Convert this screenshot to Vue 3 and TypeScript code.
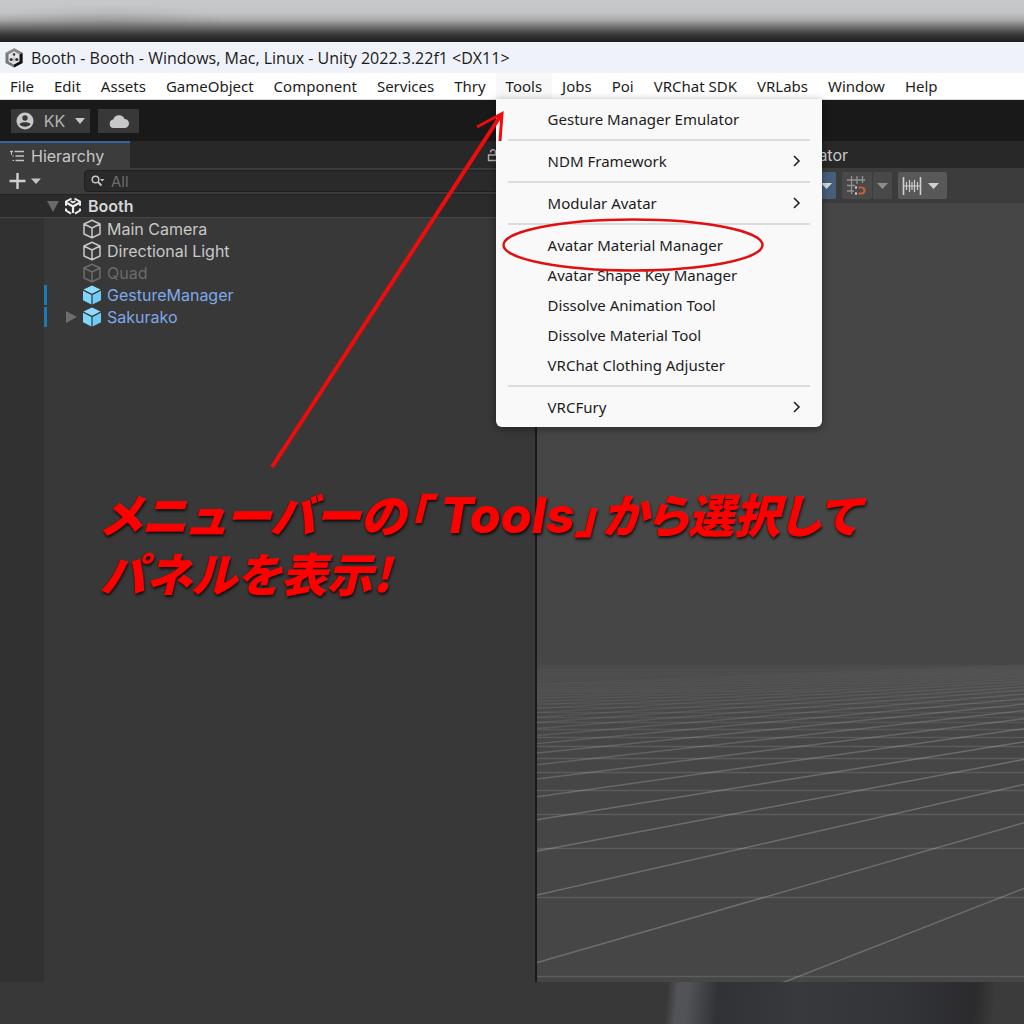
<script setup lang="ts">
interface MenuEntry {
  label?: string
  submenu?: boolean
}

interface HierarchyNode {
  name: string
  kind: 'object' | 'disabled' | 'prefab'
  expandable?: boolean
}

interface GridLine {
  x1: number
  y1: number
  x2: number
  y2: number
  opacity: number
}

const menusBefore: string[] = ['File', 'Edit', 'Assets', 'GameObject', 'Component', 'Services', 'Thry']
const menusAfter: string[] = ['Jobs', 'Poi', 'VRChat SDK', 'VRLabs', 'Window', 'Help']

const toolEntries: MenuEntry[] = [
  { label: 'Gesture Manager Emulator' },
  {},
  { label: 'NDM Framework', submenu: true },
  {},
  { label: 'Modular Avatar', submenu: true },
  {},
  { label: 'Avatar Material Manager' },
  { label: 'Avatar Shape Key Manager' },
  { label: 'Dissolve Animation Tool' },
  { label: 'Dissolve Material Tool' },
  { label: 'VRChat Clothing Adjuster' },
  {},
  { label: 'VRCFury', submenu: true },
]

const nodes: HierarchyNode[] = [
  { name: 'Main Camera', kind: 'object' },
  { name: 'Directional Light', kind: 'object' },
  { name: 'Quad', kind: 'disabled' },
  { name: 'GestureManager', kind: 'prefab' },
  { name: 'Sakurako', kind: 'prefab', expandable: true },
]

// Floor grid in perspective: evenly spaced lines have evenly spaced 1 / distance to the horizon.
const sceneWidth = 487
const horizon = 437
const vanishX = 1123

function fade(distance: number): number {
  return Math.min(0.26, 0.05 + distance / 900, (distance * distance) / 70000)
}

const crossLines: GridLine[] = Array.from({ length: 42 }, (_, n) => {
  const distance = 1 / (0.00298 + 0.000917 * n)
  const y = Math.round(horizon + distance) + 0.5
  return { x1: 0, y1: y, x2: sceneWidth, y2: y, opacity: Math.min(0.15, fade(distance)) }
})

const depthLines: GridLine[] = Array.from({ length: 26 }, (_, n) => {
  const distance = 1 / (0.00228 + 0.00082 * n)
  const end = distance * (1 - sceneWidth / vanishX)
  return { x1: 0, y1: horizon + distance, x2: sceneWidth, y2: horizon + end, opacity: fade(distance) }
})

const gridLines: GridLine[] = [...crossLines, ...depthLines]
</script>

<template>
  <div class="page">
    <div class="backdrop-top"></div>

    <header class="titlebar">
      <svg class="app-icon" viewBox="0 0 20 20" aria-hidden="true">
        <path d="M10 .5 18.500 5v10L10 19.500 1.500 15V5z" fill="#777" />
        <path d="M10 .5 18.500 5v10L10 19.500z" fill="#111" />
        <path d="M10 .5 18.500 5 10 9.500 1.500 5z" fill="#8c8c8c" />
        <path d="M10 3.500 15.500 6.500v7L10 16.500 4.500 13.500v-7z" fill="#e4e4e4" />
        <circle cx="10" cy="6.500" r="1.300" fill="#333" />
        <circle cx="7.200" cy="11.500" r="1.600" fill="#333" />
        <circle cx="12.800" cy="11.500" r="1.600" fill="#333" />
        <path d="M10 9v5" stroke="#aaa" stroke-width="1" />
      </svg>
      <span>Booth - Booth - Windows, Mac, Linux - Unity 2022.3.22f1 &lt;DX11&gt;</span>
    </header>

    <nav class="menubar">
      <button v-for="m in menusBefore" :key="m" type="button" class="menu">{{ m }}</button>
      <div class="menu-open">
        <button type="button" class="menu active" aria-expanded="true">Tools</button>
        <div class="dropdown" role="menu">
          <template v-for="(entry, i) in toolEntries" :key="i">
            <button v-if="entry.label" type="button" class="entry" role="menuitem">
              <span>{{ entry.label }}</span>
              <svg v-if="entry.submenu" width="10" height="12" viewBox="0 0 10 12" aria-hidden="true">
                <path d="M2 1 7 6 2 11" fill="none" stroke="#222" stroke-width="1.600" />
              </svg>
            </button>
            <hr v-else class="rule" />
          </template>
        </div>
      </div>
      <button v-for="m in menusAfter" :key="m" type="button" class="menu">{{ m }}</button>
    </nav>

    <div class="toolbar">
      <button type="button" class="tool account">
        <svg width="18" height="18" viewBox="0 0 18 18" aria-hidden="true">
          <circle cx="9" cy="9" r="8.500" fill="#c8c8c8" />
          <circle cx="9" cy="6" r="2.700" fill="#383838" />
          <path d="M3.500 12C5 9.800 13 9.800 14.500 12 13 15.500 5 15.500 3.500 12z" fill="#383838" />
        </svg>
        <span>KK</span>
        <svg width="10" height="6" viewBox="0 0 10 6" aria-hidden="true"><path d="M0 0h10L5 6z" fill="#c8c8c8" /></svg>
      </button>
      <button type="button" class="tool cloud" aria-label="Cloud">
        <svg width="20" height="14" viewBox="0 0 20 14" aria-hidden="true">
          <path d="M4.500 14a4.300 4.300 0 0 1-.3-8.500A6 6 0 0 1 15.500 5 4.500 4.500 0 0 1 15.500 14z" fill="#c8c8c8" />
        </svg>
      </button>
    </div>

    <main class="workspace">
      <section class="hierarchy">
        <div class="tabs">
          <button type="button" class="tab">
            <svg width="15" height="12" viewBox="0 0 15 12" aria-hidden="true">
              <path d="M0 1.500h3M4.500 1.500H14M5.500 6H14M5.500 10.500H14" stroke="#c4c4c4" stroke-width="1.400" />
              <path d="M1.500 1v4M2.500 6h1.500M2.500 10.500h1.500" stroke="#c4c4c4" stroke-width="1" />
            </svg>
            <span>Hierarchy</span>
          </button>
          <svg class="lock" width="12" height="14" viewBox="0 0 12 14" aria-hidden="true">
            <path d="M1.500 7h9v5.500h-9zM3.500 4.500C3.500 1 8.500 1 8.500 4v3" fill="none" stroke="#b0b0b0" stroke-width="1.400" />
          </svg>
        </div>
        <div class="controls">
          <button type="button" class="add" aria-label="Create">
            <svg width="32" height="18" viewBox="0 0 32 18" aria-hidden="true">
              <path d="M8.500 1v16M.500 9h16" stroke="#d0d0d0" stroke-width="2.400" />
              <path d="M22 6.500h10L27 12z" fill="#c4c4c4" />
            </svg>
          </button>
          <label class="search">
            <svg width="14" height="12" viewBox="0 0 14 12" aria-hidden="true">
              <circle cx="4.500" cy="4.500" r="3.300" fill="none" stroke="#c4c4c4" stroke-width="1.500" />
              <path d="M7 7l3.500 3.500" stroke="#c4c4c4" stroke-width="1.800" />
              <path d="M9 4h4.500L11.200 6.500z" fill="#c4c4c4" />
            </svg>
            <input type="text" placeholder="All" aria-label="Search hierarchy" />
          </label>
        </div>
        <div class="scene-row">
          <svg width="12" height="11" viewBox="0 0 12 11" aria-hidden="true"><path d="M0 0h12L6 11z" fill="#6a6a6a" /></svg>
          <svg width="18" height="18" viewBox="0 0 18 18" aria-hidden="true">
            <path d="M7.500 1.500 2 4.700v4M10.500 1.500 16 4.700v4M2 11.500v2L7 16.700M16 11.500v2L11 16.700" fill="none" stroke="#eee" stroke-width="2" />
            <path d="M9 9.500V16M9 9.500 3 6M9 9.500 15 6" stroke="#eee" stroke-width="2.200" />
            <path d="M6.500 4 9 5.500 11.500 4" fill="none" stroke="#eee" stroke-width="1.600" />
          </svg>
          <span>Booth</span>
        </div>
        <ul class="tree">
          <li v-for="node in nodes" :key="node.name" :class="['node', node.kind]">
            <span class="arrow">
              <svg v-if="node.expandable" width="11" height="12" viewBox="0 0 11 12" aria-hidden="true"><path d="M0 0 11 6 0 12z" fill="#6e6e6e" /></svg>
            </span>
            <svg v-if="node.kind === 'prefab'" width="20" height="20" viewBox="0 0 20 20" aria-hidden="true">
              <path d="M10 .5 18.500 4.500 10 8.800 1.500 4.500z" fill="#8edcff" />
              <path d="M1 5.800 9.400 10v9.500L1 15.300z" fill="#7fd6fd" />
              <path d="M19 5.800 10.600 10v9.500L19 15.300z" fill="#70cbf6" />
            </svg>
            <svg v-else width="20" height="20" viewBox="0 0 20 20" aria-hidden="true">
              <path d="M10 1.200 18 5v10L10 18.800 2 15V5zM2 5l8 4 8-4M10 9v9.500" fill="none" stroke="currentColor" stroke-width="1.500" stroke-linejoin="round" />
            </svg>
            <span>{{ node.name }}</span>
          </li>
        </ul>
      </section>

      <div class="splitter"></div>

      <section class="scene">
        <div class="tabs scene-tabs"><span>Animator</span></div>
        <div class="scene-tools">
          <button type="button" class="chip blue" aria-label="Gizmo options">
            <svg width="11" height="6" viewBox="0 0 11 6" aria-hidden="true"><path d="M0 0h11L5.500 6z" fill="#ddd" /></svg>
          </button>
          <div class="pair">
            <button type="button" class="chip snap" aria-label="Grid snapping">
              <svg width="20" height="20" viewBox="0 0 20 20" aria-hidden="true">
                <path d="M4.500 0v18M10 0v8M15.500 0v7M0 4h18M0 9.500h8M0 15h7" stroke="#929292" stroke-width="1.300" />
                <path d="M11.500 11.500h3a3 3 0 0 1 0 6h-3" fill="none" stroke="#c55f3e" stroke-width="2.200" />
                <path d="M8 10.500h2v2H8zM8 16.500h2v2H8z" fill="#ddd" />
              </svg>
            </button>
            <button type="button" class="chip more" aria-label="Snapping options">
              <svg width="11" height="6" viewBox="0 0 11 6" aria-hidden="true"><path d="M0 0h11L5.500 6z" fill="#8c8c8c" /></svg>
            </button>
          </div>
          <button type="button" class="chip ruler" aria-label="Snap increment">
            <svg width="20" height="18" viewBox="0 0 20 18" aria-hidden="true">
              <path d="M1.500 0v18M18.500 0v18" stroke="#d0d0d0" stroke-width="1.600" />
              <path d="M1 9h18M4.500 5v8M7.500 3v12M10 5v8M12.500 3v12M15.500 5v8" stroke="#d0d0d0" stroke-width="1.200" />
            </svg>
            <svg width="11" height="6" viewBox="0 0 11 6" aria-hidden="true"><path d="M0 0h11L5.500 6z" fill="#d0d0d0" /></svg>
          </button>
        </div>
        <svg class="view" viewBox="0 0 487 779" preserveAspectRatio="xMidYMax slice" aria-hidden="true">
          <defs>
            <linearGradient id="haze" x1="0" y1="0" x2="0" y2="1">
              <stop offset="0" stop-color="#fff" stop-opacity="0" />
              <stop offset="0.150" stop-color="#fff" stop-opacity="0.030" />
              <stop offset="1" stop-color="#fff" stop-opacity="0" />
            </linearGradient>
          </defs>
          <rect x="0" y="458" width="487" height="80" fill="url(#haze)" />
          <line
            v-for="(l, i) in gridLines"
            :key="i"
            :x1="l.x1"
            :y1="l.y1"
            :x2="l.x2"
            :y2="l.y2"
            :stroke-opacity="l.opacity"
            stroke="#e0e0e0"
            stroke-width="1.500"
          />
        </svg>
      </section>
    </main>

    <div class="backdrop-bottom"></div>

    <svg class="marks" width="1024" height="1024" viewBox="0 0 1024 1024" aria-hidden="true">
      <g fill="none" stroke="#f00c0c">
        <path d="M272 467 501 115" stroke-width="4" />
        <path d="M477 127 502 113.500 500 141" stroke-width="3" />
        <ellipse cx="633" cy="245" rx="129.500" ry="25.500" stroke="#e01010" stroke-width="2.400" />
      </g>
    </svg>
    <p class="caption">メニューバーの<span class="quote">「<span class="latin">Tools</span>」</span>から選択して<br />パネルを表示!</p>
  </div>
</template>

<style>
body {
  margin: 0;
  background: #383838;
}
</style>

<style scoped>
* {
  box-sizing: border-box;
}

button {
  margin: 0;
  padding: 0;
  border: 0;
  background: none;
  color: inherit;
  font: inherit;
}

svg {
  display: block;
  flex: none;
}

.page {
  position: relative;
  display: flex;
  flex-direction: column;
  min-height: 100vh;
  overflow: hidden;
  background: #383838;
  font-family: "Noto Sans", sans-serif;
  font-size: 15px;
}

.backdrop-top {
  height: 42px;
  background:
    radial-gradient(ellipse 120px 18px at 110px 22px, rgba(70, 70, 70, 0.15), transparent),
    linear-gradient(#c6c8cb 0, #c3c4c5 13px, #a9a9a9 20px, #707070 27px, #3d3d3d 34px, #1f1f1f 41px);
}

.titlebar {
  display: flex;
  align-items: center;
  gap: 7px;
  height: 31px;
  padding-left: 4px;
  background: #eff3f9;
  color: #1a1a1a;
  font-family: "Open Sans", sans-serif;
  font-size: 16px;
}

.app-icon {
  width: 20px;
  height: 20px;
}

.menubar {
  display: flex;
  height: 27px;
  background: #fff;
  border-bottom: 1px solid #ddd;
  color: #1c1c1c;
}

.menu {
  height: 26px;
  padding: 0 10px;
  white-space: nowrap;
}

.menu.active {
  background: #f8f8f8;
}

.menu-open {
  position: relative;
}

.dropdown {
  position: absolute;
  z-index: 2;
  top: 26px;
  left: 0;
  width: 326px;
  padding: 5px 0;
  border-radius: 0 0 6px 6px;
  background: #f9f9f9;
  box-shadow: 0 2px 8px rgba(0, 0, 0, 0.4);
}

.entry {
  display: flex;
  align-items: center;
  justify-content: space-between;
  width: 100%;
  height: 30px;
  padding: 0 20px 0 52px;
  text-align: left;
}

.rule {
  height: 2px;
  margin: 5px 12px;
  border: 0;
  background: #dcdcdc;
}

.toolbar {
  display: flex;
  gap: 8px;
  height: 41px;
  padding: 9px 11px;
  background: #191919;
  font-family: Inter, sans-serif;
  font-size: 16px;
  color: #b4b4b4;
}

.tool {
  display: flex;
  align-items: center;
  justify-content: center;
  height: 24px;
  background: #383838;
}

.account {
  gap: 10px;
  width: 79px;
}

.cloud {
  width: 41px;
}

.workspace {
  display: grid;
  grid-template-columns: 535fr 2px 487fr;
  flex: 1;
  font-family: Inter, sans-serif;
  font-size: 16px;
  color: #c8c8c8;
}

.hierarchy,
.scene {
  display: flex;
  flex-direction: column;
  min-width: 0;
}

.splitter {
  background: #191919;
}

.tabs {
  display: flex;
  align-items: center;
  justify-content: space-between;
  height: 27px;
  background: #282828;
}

.tab {
  display: flex;
  align-items: center;
  gap: 6px;
  width: 130px;
  height: 27px;
  padding-left: 10px;
  border-top: 2px solid #33679c;
  background: #3c3c3c;
}

.lock {
  margin-right: 36px;
}

.controls {
  display: flex;
  align-items: center;
  gap: 43px;
  height: 27px;
  padding-left: 9px;
  background: #3c3c3c;
  border-bottom: 1px solid #232323;
}

.search {
  display: flex;
  align-items: center;
  gap: 6px;
  flex: 1;
  height: 22px;
  margin-right: 8px;
  padding-left: 6px;
  border: 1px solid #1f1f1f;
  border-radius: 4px;
  background: #2a2a2a;
}

.search input {
  flex: 1;
  min-width: 0;
  padding: 0;
  border: 0;
  outline: 0;
  background: none;
  color: #c8c8c8;
  font: inherit;
  font-size: 15px;
}

.search input::placeholder {
  color: #6c6c6c;
}

.scene-row {
  display: flex;
  align-items: center;
  gap: 6px;
  height: 23px;
  padding-left: 47px;
  border-bottom: 1px solid #454545;
  background: #2b2b2b;
  color: #d6d6d6;
  font-weight: 600;
}

.scene-row svg + svg {
  margin-left: -1px;
}

.tree {
  flex: 1;
  margin: 0;
  padding: 0;
  list-style: none;
  background: linear-gradient(90deg, #313131 44px, #383838 44px);
}

.node {
  display: flex;
  align-items: center;
  gap: 5px;
  height: 22px;
  margin-left: 44px;
}

.node.disabled {
  color: #6b6b6b;
}

.node.prefab {
  color: #7fa8ea;
  background: linear-gradient(#1c7bb5, #1c7bb5) 0 50% / 3px 20px no-repeat;
}

.arrow {
  display: flex;
  justify-content: flex-end;
  width: 33px;
}

.scene {
  background: #464646;
}

.scene-tabs {
  padding-left: 243px;
}

.scene-tools {
  display: flex;
  gap: 6px;
  height: 35px;
  padding: 4px 0 4px 250px;
  background: #3c3c3c;
}

.pair {
  display: flex;
  gap: 1px;
}

.chip {
  display: flex;
  align-items: center;
  justify-content: center;
  height: 27px;
  border-radius: 2px;
  background: #494949;
}

.chip.blue {
  justify-content: flex-end;
  width: 49px;
  padding-right: 4px;
  background: #46607c;
}

.chip.snap {
  width: 30px;
}

.chip.more {
  width: 19px;
}

.chip.ruler {
  gap: 6px;
  width: 49px;
  padding-right: 4px;
  background: #585858;
}

.view {
  flex: 1 1 0;
  width: 100%;
  min-height: 0;
}

.backdrop-bottom {
  height: 42px;
  background:
    linear-gradient(95deg, transparent 65%, #525357 66%, #525357 67%, #313236 70%, #38393d 78%, #333438 88%, #2b2b2e 95%, #3b3b3b 97%),
    #383838;
}

.marks {
  position: absolute;
  z-index: 3;
  top: 0;
  left: 0;
  pointer-events: none;
}

.caption {
  position: absolute;
  z-index: 4;
  top: 484px;
  left: 100px;
  margin: 0;
  color: #f00;
  font-family: "Noto Sans CJK JP", sans-serif;
  font-size: 46px;
  font-style: italic;
  font-weight: 900;
  line-height: 59px;
  font-feature-settings: "palt";
  white-space: nowrap;
  text-shadow: 1px 2px 3px rgba(0, 0, 0, 0.8);
}

.quote {
  margin: 0 4px 0 0;
}

.latin {
  margin: 0 0 0 12px;
  font-family: Inter, "Liberation Sans", sans-serif;
  font-size: 50px;
  font-weight: 800;
  line-height: 1;
}
</style>
